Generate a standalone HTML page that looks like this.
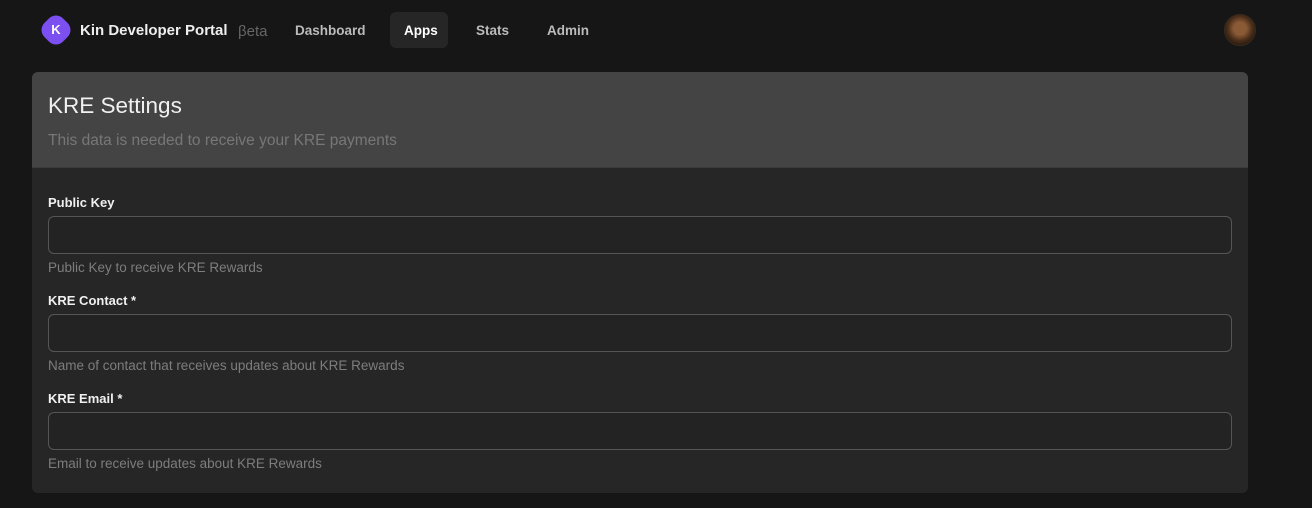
<!DOCTYPE html>
<html><head><style>
*{margin:0;padding:0;box-sizing:border-box}
body{width:1312px;height:508px;background:#161616;font-family:"Liberation Sans",sans-serif;overflow:hidden;position:relative}
.abs{position:absolute}
.logo{left:40px;top:14px;width:32px;height:32px;background:#7b4ff0;border-radius:12px;transform:rotate(45deg) scale(.82)}
.k{left:40px;top:14px;width:32px;height:32px;color:#fff;font-weight:bold;font-size:13px;text-align:center;line-height:32px}
.brand{left:80px;top:22px;color:#eee;font-size:15px;font-weight:bold}
.beta{left:238px;top:23px;color:#666;font-size:15px}
.nav{top:23px;color:#bbb;font-size:13.5px;font-weight:bold}
.pill{left:390px;top:12px;width:58px;height:36px;background:#262626;border-radius:6px}
.av{left:1224px;top:14px;width:32px;height:32px;border-radius:50%;background:radial-gradient(circle at 50% 45%,#8a5a36 0 28%,#4a2e1a 55%,#22150c 80%);border:1px solid #3a2a1e}
.card{left:32px;top:72px;width:1216px;height:421px;background:#262626;border-radius:6px;overflow:hidden}
.head{height:96px;background:#444;border-bottom:1px solid #3a3a3a}
h1{position:absolute;left:16px;top:21px;font-size:22.5px;font-weight:normal;color:#f0f0f0}
.sub{position:absolute;left:16px;top:60px;font-size:15.5px;color:#777}
.lbl{left:16px;color:#f0f0f0;font-size:13px;font-weight:bold}
.inp{left:16px;width:1184px;height:38px;border:1px solid #555;border-radius:6px;background:#232323}
.hint{left:16px;color:#7d7d7d;font-size:13.5px}
</style></head><body>
<div class="abs logo"></div><div class="abs k">K</div>
<div class="abs brand">Kin Developer Portal</div>
<div class="abs beta">βeta</div>
<div class="abs pill"></div>
<div class="abs nav" style="left:295px">Dashboard</div>
<div class="abs nav" style="left:404px;color:#fff">Apps</div>
<div class="abs nav" style="left:476px">Stats</div>
<div class="abs nav" style="left:547px">Admin</div>
<div class="abs av"></div>
<div class="abs card">
<div class="head"><h1>KRE Settings</h1><div class="sub">This data is needed to receive your KRE payments</div></div>
<div class="abs lbl" style="top:123px">Public Key</div>
<div class="abs inp" style="top:144px"></div>
<div class="abs hint" style="top:188px">Public Key to receive KRE Rewards</div>
<div class="abs lbl" style="top:221px">KRE Contact *</div>
<div class="abs inp" style="top:242px"></div>
<div class="abs hint" style="top:286px">Name of contact that receives updates about KRE Rewards</div>
<div class="abs lbl" style="top:319px">KRE Email *</div>
<div class="abs inp" style="top:340px"></div>
<div class="abs hint" style="top:384px">Email to receive updates about KRE Rewards</div>
</div>
</body></html>
